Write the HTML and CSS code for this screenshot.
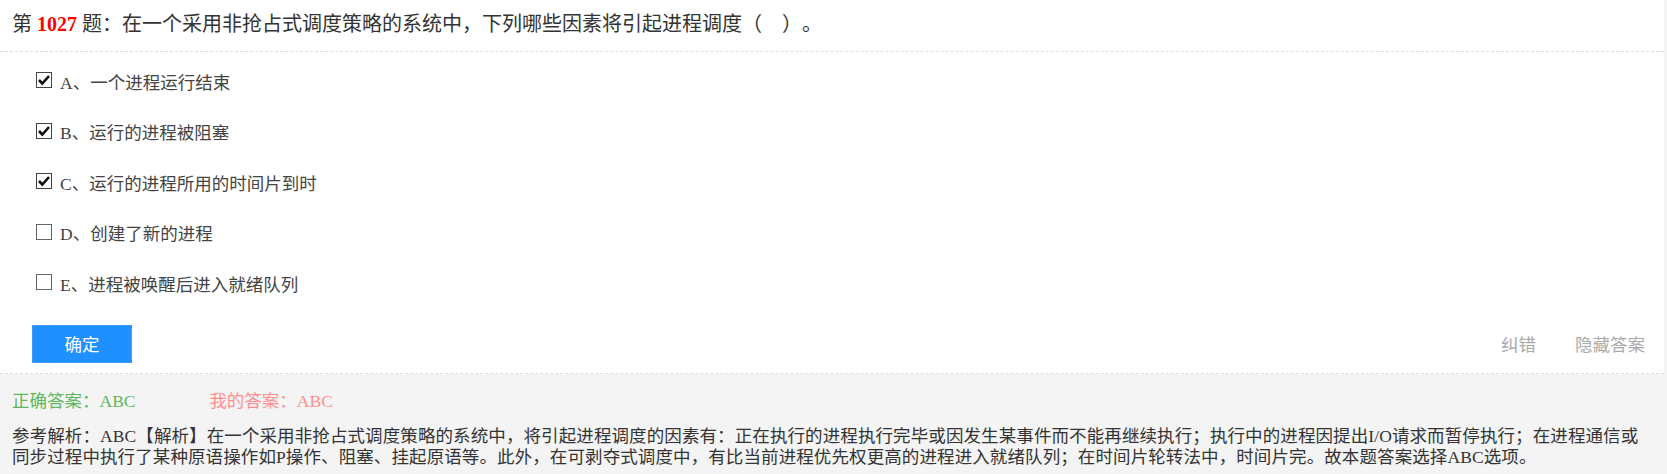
FILE: index.html
```html
<!DOCTYPE html>
<html lang="zh-CN">
<head>
<meta charset="utf-8">
<title>第1027题</title>
<link rel="stylesheet" href="styles.css">
</head>
<body>
<div class="page">
  <section class="question">
    <h1 class="q-title">第 <span class="q-num">1027</span> 题：在一个采用非抢占式调度策略的系统中，下列哪些因素将引起进程调度（　）。</h1>
    <ul class="options">
      <li class="option">
        <svg class="box" viewBox="0 0 16 16" width="16" height="16"><rect x="0.5" y="0.5" width="15" height="15" fill="#fff" stroke="#444"/><path d="M3 8 L6.3 11.5 L13 4" fill="none" stroke="#111" stroke-width="2.6"/></svg>
        <span class="opt-text">A、一个进程运行结束</span>
      </li>
      <li class="option">
        <svg class="box" viewBox="0 0 16 16" width="16" height="16"><rect x="0.5" y="0.5" width="15" height="15" fill="#fff" stroke="#444"/><path d="M3 8 L6.3 11.5 L13 4" fill="none" stroke="#111" stroke-width="2.6"/></svg>
        <span class="opt-text">B、运行的进程被阻塞</span>
      </li>
      <li class="option">
        <svg class="box" viewBox="0 0 16 16" width="16" height="16"><rect x="0.5" y="0.5" width="15" height="15" fill="#fff" stroke="#444"/><path d="M3 8 L6.3 11.5 L13 4" fill="none" stroke="#111" stroke-width="2.6"/></svg>
        <span class="opt-text">C、运行的进程所用的时间片到时</span>
      </li>
      <li class="option">
        <svg class="box" viewBox="0 0 16 16" width="16" height="16"><rect x="0.5" y="0.5" width="15" height="15" fill="#fff" stroke="#666"/></svg>
        <span class="opt-text">D、创建了新的进程</span>
      </li>
      <li class="option">
        <svg class="box" viewBox="0 0 16 16" width="16" height="16"><rect x="0.5" y="0.5" width="15" height="15" fill="#fff" stroke="#666"/></svg>
        <span class="opt-text">E、进程被唤醒后进入就绪队列</span>
      </li>
    </ul>
    <div class="actions">
      <button class="btn" type="button">确定</button>
      <div class="links">
        <a class="link">纠错</a>
        <a class="link">隐藏答案</a>
      </div>
    </div>
  </section>
  <section class="answer">
    <div class="answer-row">
      <span class="correct">正确答案：ABC</span>
      <span class="mine">我的答案：ABC</span>
    </div>
    <p class="analysis">参考解析：ABC【解析】在一个采用非抢占式调度策略的系统中，将引起进程调度的因素有：正在执行的进程执行完毕或因发生某事件而不能再继续执行；执行中的进程因提出I/O请求而暂停执行；在进程通信或<br>同步过程中执行了某种原语操作如P操作、阻塞、挂起原语等。此外，在可剥夺式调度中，有比当前进程优先权更高的进程进入就绪队列；在时间片轮转法中，时间片完。故本题答案选择ABC选项。</p>
  </section>
</div>
</body>
</html>
```

FILE: styles.css
```css
html, body {
  margin: 0;
  padding: 0;
}
body {
  background: #f4f4f4;
  font-family: "Liberation Serif", "Noto Sans CJK SC", serif;
  color: #333;
  height: 474px;
  overflow: hidden;
  text-spacing-trim: space-all;
}
.page {
  margin-right: 3px;
}
.question {
  background: #fff;
}
.q-title {
  margin: 0;
  padding: 12px 12px 0;
  height: 39px;
  line-height: 24px;
  font-size: 20px;
  font-weight: normal;
  color: #333;
  border-bottom: 1px dashed #ddd;
}
.q-num {
  color: #f00;
  font-weight: bold;
}
.options {
  list-style: none;
  margin: 0;
  padding: 4px 0 0 36px;
}
.option {
  display: flex;
  align-items: center;
  height: 50.5px;
  font-size: 17.5px;
  color: #444;
}
.box {
  flex: none;
  display: block;
  margin-right: 8px;
  margin-top: -2px;
}
.actions {
  display: flex;
  align-items: center;
  justify-content: space-between;
  padding: 16px 19px 10px 32px;
  border-bottom: 1px dashed #ddd;
}
.btn {
  width: 100px;
  height: 38px;
  border: 1px solid #3a9cff;
  background: #1e90ff;
  color: #fff;
  font-family: "Noto Sans CJK SC", sans-serif;
  font-size: 17.5px;
  padding: 0;
  cursor: pointer;
}
.links {
  display: flex;
  gap: 39px;
}
.link {
  font-size: 17.5px;
  color: #aaa;
  font-family: "Noto Sans CJK SC", sans-serif;
}
.answer {
  padding: 15px 12px 0;
}
.answer-row {
  line-height: 24px;
  font-size: 17.5px;
}
.correct {
  display: inline-block;
  width: 193px;
  color: #5cb85c;
}
.mine {
  color: #ff8f8f;
}
.analysis {
  margin: 13px 0 0;
  font-size: 17.5px;
  line-height: 21px;
  letter-spacing: 0.1px;
  color: #333;
}
```
